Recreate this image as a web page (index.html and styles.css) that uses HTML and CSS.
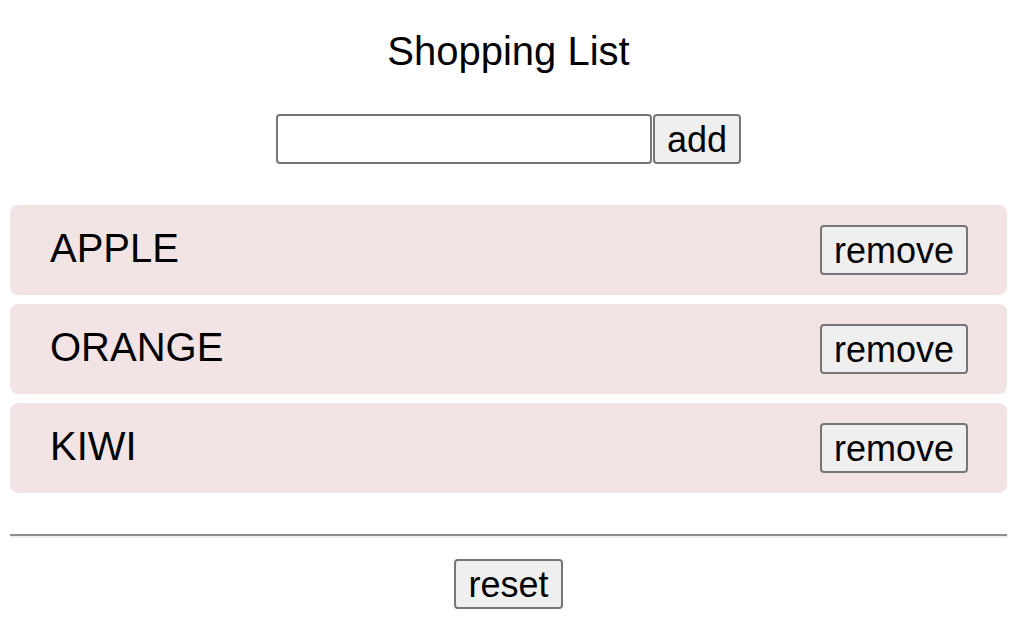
FILE: index.html
```html
<!DOCTYPE html>
<html>
<head>
<meta charset="utf-8">
<link rel="stylesheet" href="styles.css">
</head>
<body>
<div class="app">
  <h1 class="title">Shopping List</h1>
  <div class="add-row"><input class="field" type="text"><button class="btn">add</button></div>
  <ul class="list">
    <li class="item"><span class="name">APPLE</span><button class="btn">remove</button></li>
    <li class="item"><span class="name">ORANGE</span><button class="btn">remove</button></li>
    <li class="item"><span class="name">KIWI</span><button class="btn">remove</button></li>
  </ul>
  <hr class="rule">
  <div class="footer"><button class="btn">reset</button></div>
</div>
</body>
</html>
```

FILE: styles.css
```css
html, body {
  margin: 0;
  padding: 0;
  background: #fff;
}
.app {
  margin: 0 13px 0 10px;
  font-family: "Liberation Sans", Arial, sans-serif;
  color: #000;
}
.title {
  margin: 0;
  padding-top: 26px;
  font-size: 40px;
  font-weight: normal;
  text-align: center;
  line-height: 50px;
}
.add-row {
  display: flex;
  justify-content: center;
  margin-top: 38px;
  gap: 1px;
}
.field {
  box-sizing: border-box;
  width: 376px;
  height: 50px;
  border: 2px solid #767676;
  border-radius: 4px;
  margin: 0;
  padding: 0 4px;
  font-size: 36px;
  font-family: "Liberation Sans", Arial, sans-serif;
}
.btn {
  box-sizing: border-box;
  height: 50px;
  margin: 0;
  padding: 0 12px;
  border: 2px solid #767676;
  border-radius: 4px;
  background: #efefef;
  color: #000;
  font-family: "Liberation Sans", Arial, sans-serif;
  font-size: 36px;
  line-height: 48px;
}
.list {
  list-style: none;
  margin: 41px 0 0 0;
  padding: 0;
  display: flex;
  flex-direction: column;
  gap: 9px;
}
.item {
  height: 90px;
  box-sizing: border-box;
  display: flex;
  align-items: center;
  justify-content: space-between;
  padding: 0 39px 0 40px;
  background: #f2e4e5;
  border-radius: 8px;
}
.name {
  font-size: 40px;
  line-height: 46px;
  padding-bottom: 4px;
}
.rule {
  margin: 41px 0 0 0;
  height: 0;
  border: 0;
  border-top: 2px solid #8e8e8e;
  border-bottom: 2px solid #eeeeee;
}
.footer {
  display: flex;
  justify-content: center;
  margin-top: 21px;
}
```
